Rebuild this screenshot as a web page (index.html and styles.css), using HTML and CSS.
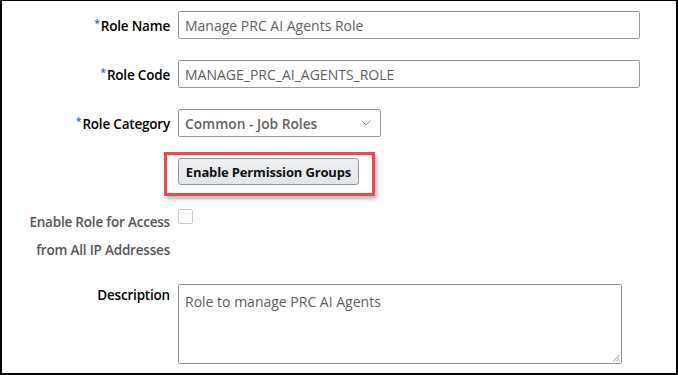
FILE: index.html
```html
<!DOCTYPE html>
<html>
<head>
<meta charset="utf-8">
<link rel="stylesheet" href="styles.css">
</head>
<body>
<div class="frame">
  <div class="row">
    <label class="label req"><span class="star">*</span>Role Name</label>
    <div class="input wide">Manage PRC AI Agents Role</div>
  </div>
  <div class="row">
    <label class="label req"><span class="star">*</span>Role Code</label>
    <div class="input wide">MANAGE_PRC_AI_AGENTS_ROLE</div>
  </div>
  <div class="row">
    <label class="label req"><span class="star">*</span>Role Category</label>
    <div class="input select">
      <span class="seltext">Common - Job Roles</span>
      <svg class="chev" width="10" height="6" viewBox="0 0 10 6"><path d="M0.5 0.5 L5 5 L9.5 0.5" fill="none" stroke="#8a9097" stroke-width="1"/></svg>
    </div>
  </div>
  <div class="row btnrow">
    <div class="highlight">
      <button class="btn">Enable Permission Groups</button>
    </div>
  </div>
  <div class="row checkrow">
    <label class="label muted">Enable Role for Access<br>from All IP Addresses</label>
    <span class="checkbox"></span>
  </div>
  <div class="row descrow">
    <label class="label">Description</label>
    <div class="textarea">Role to manage PRC AI Agents
      <svg class="grip" width="8" height="8" viewBox="0 0 8 8"><path d="M7.5 1 L1 7.5 M7.5 4 L4 7.5 M7.5 6.5 L6.5 7.5" stroke="#777" stroke-width="0.8"/></svg>
    </div>
  </div>
</div>
</body>
</html>
```

FILE: styles.css
```css
html, body {
  margin: 0;
  padding: 0;
  background: #fff;
}
.frame {
  box-sizing: border-box;
  width: 678px;
  height: 375px;
  border-top: 1px solid #000;
  border-left: 2px solid #000;
  border-right: 2px solid #000;
  border-bottom: 2px solid #000;
  padding-top: 10px;
  font-family: "Open Sans", "Noto Sans", sans-serif;
  overflow: hidden;
}
.row {
  display: flex;
  align-items: center;
  margin-bottom: 21px;
}
.label {
  width: 168px;
  flex: none;
  text-align: right;
  font-size: 13.5px;
  font-weight: 600;
  color: #000;
  margin-right: 8px;
  letter-spacing: -0.2px;
}
.star {
  color: #2c6db3;
  font-size: 10.5px;
  vertical-align: 4px;
  margin-right: 1px;
}
.input {
  box-sizing: border-box;
  height: 28px;
  border: 1px solid #8e9ba6;
  border-radius: 2px;
  padding: 0 6px;
  display: flex;
  align-items: center;
  font-size: 14px;
  color: #5e5e5e;
}
.wide {
  width: 462px;
}
.select {
  width: 203px;
  justify-content: space-between;
  padding-right: 9px;
}
.seltext {
  font-size: 13.75px;
  font-weight: 600;
  color: #636363;
}
.chev {
  display: block;
}
.btnrow {
  margin-top: -6px;
  margin-bottom: 12px;
  padding-left: 162px;
}
.highlight {
  border: 3px solid #f0484e;
  padding: 3px 13px 8px 11px;
  box-shadow: 2px 3px 4px rgba(0,0,0,0.28);
}
.btn {
  box-sizing: border-box;
  height: 27px;
  width: 181px;
  border: 1px solid #8a97a3;
  border-radius: 3px;
  background: linear-gradient(#eef0f2, #e3e6e9);
  font-family: "Open Sans", "Noto Sans", sans-serif;
  font-size: 13px;
  font-weight: 700;
  color: #111;
  padding: 0;
  letter-spacing: -0.15px;
}
.checkrow {
  align-items: flex-start;
  margin-bottom: 20px;
}
.muted {
  color: #555;
  line-height: 28px;
}
.checkbox {
  box-sizing: border-box;
  width: 15px;
  height: 15px;
  border: 1px solid #c9c9c9;
  border-radius: 2px;
  margin-top: 1px;
}
.descrow {
  align-items: flex-start;
}
.descrow .label {
  margin-top: 1px;
  line-height: 20px;
}
.textarea {
  position: relative;
  box-sizing: border-box;
  width: 444px;
  height: 80px;
  border: 1px solid #8e9ba6;
  border-radius: 2px;
  padding: 7px 6px;
  font-size: 14px;
  line-height: 19px;
  color: #5e5e5e;
}
.grip {
  position: absolute;
  right: 1px;
  bottom: 1px;
}
```
